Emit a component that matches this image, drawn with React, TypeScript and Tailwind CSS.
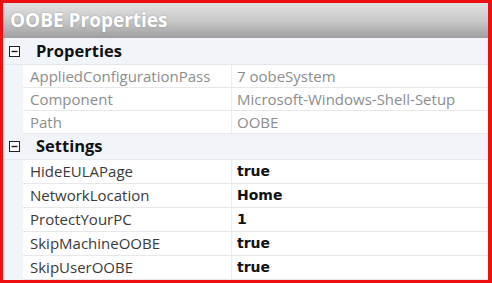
import React from 'react'

type Row = { name: string; value: string }

const properties: Row[] = [
  { name: 'AppliedConfigurationPass', value: '7 oobeSystem' },
  { name: 'Component', value: 'Microsoft-Windows-Shell-Setup' },
  { name: 'Path', value: 'OOBE' },
]

const settings: Row[] = [
  { name: 'HideEULAPage', value: 'true' },
  { name: 'NetworkLocation', value: 'Home' },
  { name: 'ProtectYourPC', value: '1' },
  { name: 'SkipMachineOOBE', value: 'true' },
  { name: 'SkipUserOOBE', value: 'true' },
]

function MinusBox() {
  return (
    <svg width="11" height="11" viewBox="0 0 11 11" className="shrink-0">
      <rect x="0.5" y="0.5" width="10" height="10" fill="white" stroke="#222" strokeWidth="1" />
      <line x1="2.5" y1="5.5" x2="8.5" y2="5.5" stroke="#111" strokeWidth="1.3" />
    </svg>
  )
}

function Category({ label, height }: { label: string; height: string }) {
  return (
    <div className={`flex items-center bg-[#f1f4f8] border-b border-[#e4e7eb] ${height}`}>
      <div className="w-[20px] flex justify-center pl-[2px]">
        <MinusBox />
      </div>
      <span className="ml-[13px] text-[16.5px] font-bold text-[#111]">{label}</span>
    </div>
  )
}

function PropRow({ row, muted, height }: { row: Row; muted?: boolean; height: string }) {
  return (
    <div className={`flex ${height}`}>
      <div className="w-[20px] shrink-0 bg-[#f1f4f8]" />
      <div className="flex flex-1 bg-white border-b border-[#e8e8e8]">
        <div className={`w-[209px] shrink-0 flex items-center pl-[7px] border-r border-[#ececec] text-[15px] ${muted ? 'text-[#8d8d8d]' : 'text-[#3a3a3a]'}`}>
          {row.name}
        </div>
        <div className={`flex items-center pl-[5px] ${muted ? 'text-[15px] text-[#8d8d8d]' : "text-[14px] font-bold text-[#111] font-['DejaVu_Sans',sans-serif]"}`}>
          {row.value}
        </div>
      </div>
    </div>
  )
}

export default function App() {
  return (
    <div className="w-[492px] h-[283px] border-[3px] border-r-[4px] border-[#ee1010] bg-white flex flex-col overflow-hidden font-['Open_Sans','Noto_Sans',sans-serif]">
      <div className="h-[35px] shrink-0 flex items-center pl-[7px] bg-gradient-to-b from-[#e2e2e2] via-[#c9c9c9] to-[#9e9e9e]">
        <span className="text-[19px] font-bold text-white [text-shadow:0_0_2px_rgba(0,0,0,0.25)]">OOBE Properties</span>
      </div>
      <div className="flex flex-col">
        <Category label="Properties" height="h-[27px]" />
        {properties.map((r) => (
          <PropRow key={r.name} row={r} muted height="h-[23px]" />
        ))}
        <Category label="Settings" height="h-[26px]" />
        {settings.map((r) => (
          <PropRow key={r.name} row={r} height="h-[24px]" />
        ))}
      </div>
    </div>
  )
}
